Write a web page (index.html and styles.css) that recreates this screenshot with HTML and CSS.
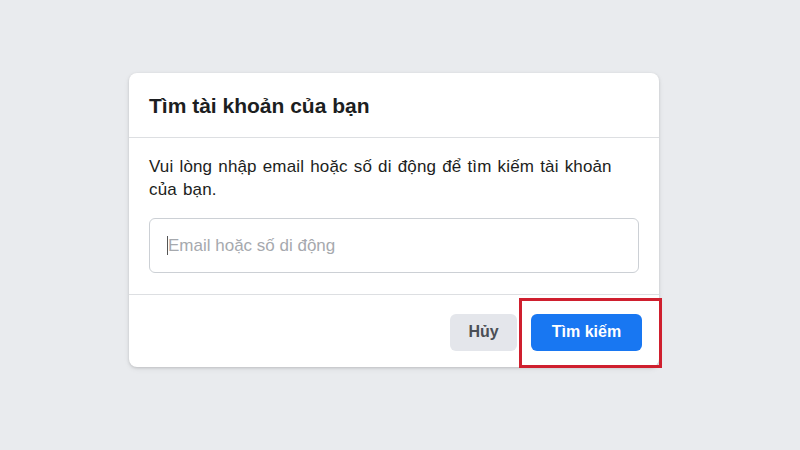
FILE: index.html
```html
<!DOCTYPE html>
<html lang="vi">
<head>
<meta charset="utf-8">
<title>Tìm tài khoản của bạn</title>
<link rel="stylesheet" href="styles.css">
</head>
<body>
<div class="card">
  <div class="card-header">
    <h2 class="title">Tìm tài khoản của bạn</h2>
  </div>
  <div class="card-body">
    <p class="desc">Vui lòng nhập email hoặc số di động để tìm kiếm tài khoản của bạn.</p>
    <div class="field">
      <span class="caret"></span>
      <input class="input" type="text" placeholder="Email hoặc số di động">
    </div>
  </div>
  <div class="card-footer">
    <button class="btn btn-cancel">Hủy</button>
    <button class="btn btn-primary">Tìm kiếm</button>
    <span class="highlight"></span>
  </div>
</div>
</body>
</html>
```
FILE: styles.css
```css
html, body {
  margin: 0;
  padding: 0;
}
body {
  background: #e9ebee;
  font-family: "Liberation Sans", Arial, sans-serif;
  color: #1c1e21;
  width: 800px;
  height: 450px;
  padding-top: 73px;
  box-sizing: border-box;
}
.card {
  margin-left: 129px;
  width: 530px;
  background: #fff;
  border-radius: 8px;
  box-shadow: 0 1px 3px rgba(0, 0, 0, 0.15), 0 2px 6px rgba(0, 0, 0, 0.06);
}
.card-header {
  height: 65px;
  box-sizing: border-box;
  padding: 0 20px;
  display: flex;
  align-items: center;
  border-bottom: 1px solid #dddfe2;
}
.title {
  margin: 0;
  font-size: 21px;
  font-weight: bold;
  color: #1c1e21;
  padding-top: 2px;
}
.card-body {
  padding: 17px 20px 21px;
  border-bottom: 1px solid #dddfe2;
}
.desc {
  margin: 0 0 17px;
  font-size: 17px;
  line-height: 23px;
  letter-spacing: 0.15px;
  word-spacing: 1.2px;
  color: #1c1e21;
}
.field {
  height: 55px;
  box-sizing: border-box;
  border: 1px solid #ccd0d5;
  border-radius: 6px;
  display: flex;
  align-items: center;
  padding: 0 16px 0 17px;
}
.caret {
  width: 1px;
  height: 19px;
  background: #555;
  flex: none;
}
.input {
  flex: 1;
  border: 0;
  outline: none;
  font-family: "Liberation Sans", Arial, sans-serif;
  font-size: 17px;
  color: #1c1e21;
  padding: 0;
  background: transparent;
}
.input::placeholder {
  color: #a6a9ae;
}
.card-footer {
  position: relative;
  height: 72px;
  box-sizing: border-box;
  padding: 0 17px 0 20px;
  display: flex;
  justify-content: flex-end;
  align-items: center;
  gap: 14px;
}
.btn {
  height: 37px;
  border: 0;
  border-radius: 6px;
  font-family: "Liberation Sans", Arial, sans-serif;
  font-size: 16px;
  font-weight: bold;
  padding: 0;
  margin-top: 2px;
}
.btn-cancel {
  width: 67px;
  background: #e4e6eb;
  color: #4b4f56;
}
.btn-primary {
  width: 111px;
  background: #1877f2;
  color: #fff;
}
.highlight {
  position: absolute;
  left: 390px;
  top: 3px;
  width: 143px;
  height: 70px;
  box-sizing: border-box;
  border: 3px solid #cf1f2e;
  pointer-events: none;
}
```
